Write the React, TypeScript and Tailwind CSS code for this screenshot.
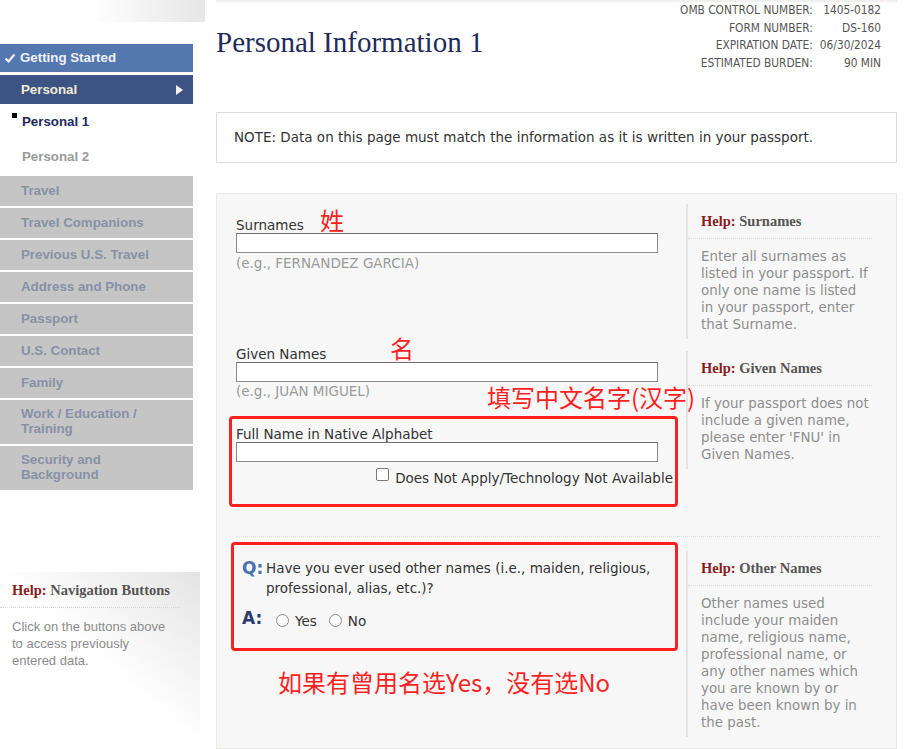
import React from "react";

const sans = { fontFamily: '"DejaVu Sans", Verdana, sans-serif' };
const arial = { fontFamily: '"Liberation Sans", Arial, sans-serif' };
const serif = { fontFamily: '"Liberation Serif", "Times New Roman", serif' };
const cjk = { fontFamily: '"Noto Sans CJK SC", "Noto Sans", sans-serif' };
const cond = { fontFamily: '"DejaVu Sans Condensed", "Liberation Sans Narrow", "DejaVu Sans", sans-serif' };

const grayItems: { label: React.ReactNode; tall?: boolean }[] = [
  { label: "Travel" },
  { label: "Travel Companions" },
  { label: "Previous U.S. Travel" },
  { label: "Address and Phone" },
  { label: "Passport" },
  { label: "U.S. Contact" },
  { label: "Family" },
  { label: <>Work / Education /<br />Training</>, tall: true },
  { label: <>Security and<br />Background</>, tall: true },
];

function HelpBlock({ title, children, className = "" }: { title: string; children: React.ReactNode; className?: string }) {
  return (
    <div className={`border-l-2 border-[#e3e3e3] ${className}`}>
      <div className="pl-[13px] pt-[8px] pb-[8px] border-b border-dotted border-[#d6d6d6] text-[14.5px] leading-[18px] font-bold text-[#555]" style={serif}>
        <span className="text-[#8b1c1c]">Help:</span> {title}
      </div>
      <p className="pl-[13px] pt-[9px] pb-[6px] text-[13.4px] leading-[17px] text-[#8e8e8e] whitespace-nowrap" style={sans}>
        {children}
      </p>
    </div>
  );
}

function TextInput() {
  return <div className="h-[20px] w-[422px] bg-white border border-[#8d8d8d] border-t-[#6f6f6f]" />;
}

function Radio({ label }: { label: string }) {
  return (
    <span className="flex items-center">
      <span className="w-[13px] h-[13px] rounded-full border border-[#8a8a8a] bg-white" />
      <span className="ml-[6px] text-[13.5px] text-[#333]">{label}</span>
    </span>
  );
}

export default function App() {
  return (
    <div className="flex w-[921px] h-[749px] overflow-hidden bg-white">
      {/* Sidebar */}
      <aside className="w-[205px] shrink-0 flex flex-col" style={arial}>
        <div className="h-[22px] ml-[90px] bg-gradient-to-r from-white to-[#e6e6e6]" />
        <nav className="w-[193px] mt-[22px] flex flex-col">
          <div className="h-[28px] bg-[#5577af] flex items-center pl-[4px] text-[13.3px] font-bold text-[#eef2fa]">
            <svg width="12" height="12" viewBox="0 0 12 12" className="mr-[4px]">
              <polyline points="1.5,6.5 4.5,9.5 10.5,2.5" fill="none" stroke="#eef2fa" strokeWidth="2.2" />
            </svg>
            Getting Started
          </div>
          <div className="mt-[3px] h-[29px] bg-[#3d5384] flex items-center justify-between pl-[21px] pr-[10px] text-[13.3px] font-bold text-[#f2ecd6]">
            <span>Personal</span>
            <svg width="7" height="10" viewBox="0 0 7 10"><polygon points="0,0 7,5 0,10" fill="#f4f4f4" /></svg>
          </div>
          <div className="relative h-[36px] flex items-center pl-[22px] text-[13.3px] font-bold text-[#1e2b5c]">
            <span className="absolute left-[12px] top-[9px] w-[5px] h-[5px] bg-black" />
            Personal 1
          </div>
          <div className="h-[34px] flex items-center pl-[22px] text-[13.3px] font-bold text-[#9a9a9a]">Personal 2</div>
          <div className="mt-[2px] flex flex-col gap-[2px]">
            {grayItems.map((it, i) => (
              <div
                key={i}
                className={`bg-[#c5c5c5] pl-[21px] text-[13.3px] font-bold text-[#8891a5] ${it.tall ? "h-[44px] pt-[6px] leading-[15px]" : "h-[30px] flex items-center"}`}
              >
                {it.label}
              </div>
            ))}
          </div>
        </nav>
        <div className="mt-[82px] w-[200px] flex-1 bg-gradient-to-bl from-[#e4e4e4] via-white to-white">
          <div className="pl-[12px] pt-[9px] pb-[8px] mr-[20px] border-b border-dotted border-[#d4d4d4] text-[14.5px] leading-[18px] font-bold text-[#555]" style={serif}>
            <span className="text-[#8b1c1c]">Help:</span> Navigation Buttons
          </div>
          <p className="pl-[12px] pt-[10px] text-[13px] leading-[17px] text-[#8c8c8c]">
            Click on the buttons above<br />to access previously<br />entered data.
          </p>
        </div>
      </aside>

      {/* Main */}
      <main className="ml-[11px] w-[681px] shrink-0 flex flex-col" style={sans}>
        <div className="h-[2px] bg-[#f0f0f0]" />
        <div className="h-[111px] flex justify-between items-start">
          <h1 className="mt-[23px] text-[29px] leading-[34px] text-[#1f2c5b]" style={serif}>Personal Information 1</h1>
          <div className="mr-[16px] grid grid-cols-[auto_auto] content-start gap-x-[7px] text-[11.8px] leading-[17.6px] text-[#555] text-right whitespace-nowrap" style={cond}>
            <span>OMB CONTROL NUMBER:</span><span>1405-0182</span>
            <span>FORM NUMBER:</span><span>DS-160</span>
            <span>EXPIRATION DATE:</span><span>06/30/2024</span>
            <span>ESTIMATED BURDEN:</span><span>90 MIN</span>
          </div>
        </div>

        <div className="h-[51px] border border-[#dedede] flex items-center pl-[17px] text-[13.5px] text-[#333] whitespace-nowrap">
          NOTE: Data on this page must match the information as it is written in your passport.
        </div>

        <section className="relative mt-[30px] h-[560px] bg-[#f7f7f7] border border-[#e8e8e2] pl-[19px] pr-[24px]">
          {/* annotations */}
          <span className="absolute left-[103px] top-[10px] text-[24px] leading-[32px] text-[#ff1f1f]" style={cjk}>姓</span>
          <span className="absolute left-[173px] top-[138px] text-[24px] leading-[32px] text-[#ff1f1f]" style={cjk}>名</span>
          <span className="absolute left-[270px] top-[187px] text-[24px] leading-[32px] text-[#ff1f1f] whitespace-nowrap" style={cjk}>填写中文名字(汉字)</span>

          <div className="flex">
            <div className="w-[450px] pt-[23px]">
              <div className="text-[13.5px] leading-[16px] text-[#333]">Surnames</div>
              <TextInput />
              <div className="mt-[2px] text-[13.5px] leading-[16px] text-[#9a9a9a]">(e.g., FERNANDEZ GARCIA)</div>

              <div className="mt-[75px] text-[13.5px] leading-[16px] text-[#333]">Given Names</div>
              <TextInput />
              <div className="mt-[1px] text-[13.5px] leading-[16px] text-[#9a9a9a]">(e.g., JUAN MIGUEL)</div>

              <div className="mt-[17px] -ml-[7px] w-[449px] border-[3px] border-[#ff1f1f] rounded-[4px] pl-[4px] pt-[7px] pb-[18px]">
                <div className="text-[13.5px] leading-[16px] text-[#333]">Full Name in Native Alphabet</div>
                <TextInput />
                <div className="mt-[5px] flex justify-end pr-[2px] items-center">
                  <span className="w-[13px] h-[13px] border border-[#777] rounded-[2px] bg-white mr-[6px] -mt-[4px]" />
                  <span className="text-[13.5px] leading-[16px] text-[#333] mt-[3px] whitespace-nowrap">Does Not Apply/Technology Not Available</span>
                </div>
              </div>
              <div className="h-[29px]" />
            </div>

            <div className="w-[186px] pt-[10px]">
              <HelpBlock title="Surnames">
                Enter all surnames as<br />listed in your passport. If<br />only one name is listed<br />in your passport, enter<br />that Surname.
              </HelpBlock>
              <HelpBlock title="Given Names" className="mt-[12px]">
                If your passport does not<br />include a given name,<br />please enter 'FNU' in<br />Given Names.
              </HelpBlock>
            </div>
          </div>

          <div className="-mr-[8px] border-t border-dotted border-[#dcdcdc]" />

          <div className="flex">
            <div className="w-[450px]">
              <div className="mt-[5px] -ml-[5px] w-[447px] h-[109px] border-[3px] border-[#ff1f1f] rounded-[4px] pl-[8px] pt-[13px]">
                <div className="flex">
                  <span className="w-[24px] shrink-0 text-[17px] leading-[20px] font-bold text-[#4a70ad]">Q:</span>
                  <span className="text-[13.5px] leading-[20px] text-[#333] whitespace-nowrap">
                    Have you ever used other names (i.e., maiden, religious,<br />professional, alias, etc.)?
                  </span>
                </div>
                <div className="mt-[13px] flex items-center h-[20px]">
                  <span className="w-[34px] shrink-0 text-[17px] leading-[20px] font-bold text-[#2c3d6b] -mt-[6px]">A:</span>
                  <Radio label="Yes" />
                  <span className="w-[12px]" />
                  <Radio label="No" />
                </div>
              </div>
              <div className="mt-[15px] pl-[42px] text-[24px] leading-[32px] text-[#ff1f1f] whitespace-nowrap" style={cjk}>
                如果有曾用名选Yes，没有选No
              </div>
            </div>
            <div className="w-[186px] pt-[14px]">
              <HelpBlock title="Other Names">
                Other names used<br />include your maiden<br />name, religious name,<br />professional name, or<br />any other names which<br />you are known by or<br />have been known by in<br />the past.
              </HelpBlock>
            </div>
          </div>
        </section>
      </main>
    </div>
  );
}
